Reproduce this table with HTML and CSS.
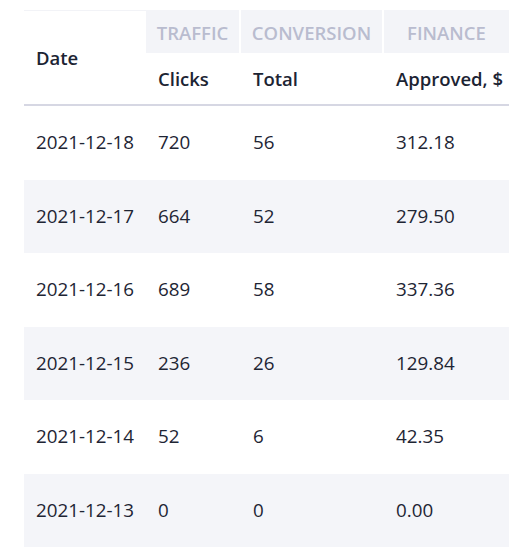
FILE: index.html
```html
<!DOCTYPE html>
<html>
<head>
<meta charset="utf-8">
<link rel="stylesheet" href="styles.css">
</head>
<body>
<table class="stats">
  <colgroup>
    <col class="c-date">
    <col class="c-clicks">
    <col class="c-total">
    <col class="c-approved">
  </colgroup>
  <thead>
    <tr class="groups">
      <th class="date-head" rowspan="2">Date</th>
      <th class="group gap">TRAFFIC</th>
      <th class="group gap">CONVERSION</th>
      <th class="group">FINANCE</th>
    </tr>
    <tr class="subs">
      <th>Clicks</th>
      <th>Total</th>
      <th>Approved, $</th>
    </tr>
  </thead>
  <tbody>
    <tr><td>2021-12-18</td><td>720</td><td>56</td><td>312.18</td></tr>
    <tr><td>2021-12-17</td><td>664</td><td>52</td><td>279.50</td></tr>
    <tr><td>2021-12-16</td><td>689</td><td>58</td><td>337.36</td></tr>
    <tr><td>2021-12-15</td><td>236</td><td>26</td><td>129.84</td></tr>
    <tr><td>2021-12-14</td><td>52</td><td>6</td><td>42.35</td></tr>
    <tr><td>2021-12-13</td><td>0</td><td>0</td><td>0.00</td></tr>
  </tbody>
</table>
</body>
</html>
```

FILE: styles.css
```css
html, body {
  margin: 0;
  padding: 0;
  background: #ffffff;
}

body {
  padding: 10px 0 0 24px;
  font-family: "Open Sans", "Noto Sans", sans-serif;
  color: #1c2433;
}

.stats {
  border-collapse: separate;
  border-spacing: 0;
  table-layout: fixed;
  width: 485px;
  font-size: 18.8px;
}

.c-date { width: 122px; }
.c-clicks { width: 95px; }
.c-total { width: 143px; }
.c-approved { width: 125px; }

.stats th,
.stats td {
  padding: 0 12px;
  text-align: left;
  white-space: nowrap;
}

.date-head {
  border-top: 1px solid #f2f3f7;
  border-bottom: 2px solid #d6d7e3;
  font-weight: 600;
  font-size: 18.5px;
  vertical-align: middle;
}

.groups .group {
  height: 43px;
  box-sizing: border-box;
  background: #f3f4f8;
  color: #b9bccf;
  font-weight: 600;
  font-size: 18.5px;
  text-align: center;
  padding: 2px 0 0;
}

.groups .gap {
  border-right: 2px solid #ffffff;
}

.subs th {
  height: 53px;
  box-sizing: border-box;
  font-weight: 600;
  font-size: 18.5px;
  border-bottom: 2px solid #d6d7e3;
}

.stats tbody td {
  height: 73.5px;
  box-sizing: border-box;
  padding-bottom: 1px;
  font-weight: 400;
  color: #1e2534;
}

.stats tbody tr:nth-child(even) td {
  background: #f4f5f9;
}
```
